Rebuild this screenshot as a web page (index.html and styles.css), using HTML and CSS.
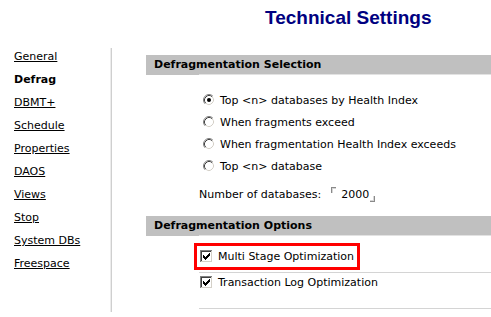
FILE: index.html
```html
<!DOCTYPE html>
<html>
<head>
<meta charset="utf-8">
<title>Technical Settings</title>
<link rel="stylesheet" href="styles.css">
</head>
<body>
<h1 class="page-title">Technical Settings</h1>
<div class="main">
  <nav class="side-nav">
    <a class="nav-link" href="#">General</a>
    <span class="nav-link current">Defrag</span>
    <a class="nav-link" href="#">DBMT+</a>
    <a class="nav-link" href="#">Schedule</a>
    <a class="nav-link" href="#">Properties</a>
    <a class="nav-link" href="#">DAOS</a>
    <a class="nav-link" href="#">Views</a>
    <a class="nav-link" href="#">Stop</a>
    <a class="nav-link" href="#">System DBs</a>
    <a class="nav-link" href="#">Freespace</a>
  </nav>
  <section class="content">
    <div class="section-head">Defragmentation Selection</div>
    <div class="radio-list">
      <div class="radio-row">
        <svg class="radio" width="12" height="12" viewBox="0 0 12 12"><circle cx="6" cy="6" r="5" fill="#fff"/><path d="M2.11 9.89A5.5 5.5 0 0 1 9.89 2.11" fill="none" stroke="#808080"/><path d="M9.89 2.11A5.5 5.5 0 0 1 2.11 9.89" fill="none" stroke="#fff"/><path d="M2.82 9.18A4.5 4.5 0 0 1 9.18 2.82" fill="none" stroke="#404040"/><path d="M9.18 2.82A4.5 4.5 0 0 1 2.82 9.18" fill="none" stroke="#d4d0c8"/><circle cx="6" cy="6" r="2" fill="#000"/></svg>
        <span>Top &lt;n&gt; databases by Health Index</span>
      </div>
      <div class="radio-row">
        <svg class="radio" width="12" height="12" viewBox="0 0 12 12"><circle cx="6" cy="6" r="5" fill="#fff"/><path d="M2.11 9.89A5.5 5.5 0 0 1 9.89 2.11" fill="none" stroke="#808080"/><path d="M9.89 2.11A5.5 5.5 0 0 1 2.11 9.89" fill="none" stroke="#fff"/><path d="M2.82 9.18A4.5 4.5 0 0 1 9.18 2.82" fill="none" stroke="#404040"/><path d="M9.18 2.82A4.5 4.5 0 0 1 2.82 9.18" fill="none" stroke="#d4d0c8"/></svg>
        <span>When fragments exceed</span>
      </div>
      <div class="radio-row">
        <svg class="radio" width="12" height="12" viewBox="0 0 12 12"><circle cx="6" cy="6" r="5" fill="#fff"/><path d="M2.11 9.89A5.5 5.5 0 0 1 9.89 2.11" fill="none" stroke="#808080"/><path d="M9.89 2.11A5.5 5.5 0 0 1 2.11 9.89" fill="none" stroke="#fff"/><path d="M2.82 9.18A4.5 4.5 0 0 1 9.18 2.82" fill="none" stroke="#404040"/><path d="M9.18 2.82A4.5 4.5 0 0 1 2.82 9.18" fill="none" stroke="#d4d0c8"/></svg>
        <span>When fragmentation Health Index exceeds</span>
      </div>
      <div class="radio-row">
        <svg class="radio" width="12" height="12" viewBox="0 0 12 12"><circle cx="6" cy="6" r="5" fill="#fff"/><path d="M2.11 9.89A5.5 5.5 0 0 1 9.89 2.11" fill="none" stroke="#808080"/><path d="M9.89 2.11A5.5 5.5 0 0 1 2.11 9.89" fill="none" stroke="#fff"/><path d="M2.82 9.18A4.5 4.5 0 0 1 9.18 2.82" fill="none" stroke="#404040"/><path d="M9.18 2.82A4.5 4.5 0 0 1 2.82 9.18" fill="none" stroke="#d4d0c8"/></svg>
        <span>Top &lt;n&gt; database</span>
      </div>
    </div>
    <div class="number-row">
      <span>Number of databases:</span>
      <span class="num-field">2000</span>
    </div>
    <div class="section-head">Defragmentation Options</div>
    <div class="options">
      <div class="opt">
        <span class="opt-item highlight">
          <svg class="check" width="13" height="13" viewBox="0 0 13 13" shape-rendering="crispEdges"><rect width="13" height="13" fill="#fff"/><path d="M0.5 12V0.5H12" stroke="#808080" fill="none"/><path d="M1.5 11V1.5H11" stroke="#404040" fill="none"/><path d="M0 12.5H12.5V0" stroke="#fff" fill="none"/><path d="M1 11.5H11.5V1" stroke="#d4d0c8" fill="none"/><path d="M3 5h1v3H3zM4 6h1v3H4zM5 7h1v3H5zM6 6h1v3H6zM7 5h1v3H7zM8 4h1v3H8zM9 3h1v3H9z" fill="#000"/></svg>
          <span>Multi Stage Optimization</span>
        </span>
      </div>
      <div class="opt">
        <span class="opt-item">
          <svg class="check" width="13" height="13" viewBox="0 0 13 13" shape-rendering="crispEdges"><rect width="13" height="13" fill="#fff"/><path d="M0.5 12V0.5H12" stroke="#808080" fill="none"/><path d="M1.5 11V1.5H11" stroke="#404040" fill="none"/><path d="M0 12.5H12.5V0" stroke="#fff" fill="none"/><path d="M1 11.5H11.5V1" stroke="#d4d0c8" fill="none"/><path d="M3 5h1v3H3zM4 6h1v3H4zM5 7h1v3H5zM6 6h1v3H6zM7 5h1v3H7zM8 4h1v3H8zM9 3h1v3H9z" fill="#000"/></svg>
          <span>Transaction Log Optimization</span>
        </span>
      </div>
    </div>
  </section>
</div>
</body>
</html>
```
FILE: styles.css
```css
html, body {
  margin: 0;
  padding: 0;
  background: #fff;
}
body {
  font-family: "DejaVu Sans", Verdana, sans-serif;
  font-size: 11px;
  color: #000;
}
.page-title {
  margin: 0;
  padding: 7px 0 0 265px;
  font-family: "Liberation Sans", Arial, sans-serif;
  font-size: 19px;
  line-height: 22px;
  font-weight: bold;
  color: #000080;
}
.main {
  display: flex;
  align-items: flex-start;
  margin-top: 16px;
}
.side-nav {
  width: 97px;
  padding-left: 14px;
  display: flex;
  flex-direction: column;
  align-items: flex-start;
}
.nav-link {
  line-height: 23px;
  color: #000;
  text-decoration: underline;
}
.nav-link.current {
  font-weight: bold;
  text-decoration: none;
}
.content {
  flex: 1;
  margin-top: 3px;
  border-left: 1px solid #cfcfcf;
  box-shadow: -1px 0 0 #ececec;
  padding: 7px 0 3px 34px;
}
.section-head {
  height: 20px;
  line-height: 20px;
  padding-left: 8px;
  font-weight: bold;
  background: linear-gradient(to right, #c0c0c0 53px, #e2e2e2 53px) left bottom / 100% 1px no-repeat, #c0c0c0;
}
.radio-list {
  margin-top: 14px;
  padding-left: 57px;
}
.radio-row {
  display: flex;
  align-items: center;
  height: 22px;
  gap: 5px;
}
.radio {
  display: block;
  flex: none;
}
.number-row {
  display: flex;
  align-items: center;
  height: 22px;
  margin: 6px 0 11px;
  padding-left: 53px;
}
.num-field {
  position: relative;
  width: 34px;
  height: 13px;
  line-height: 13px;
  margin-left: 10px;
  padding-left: 10px;
  margin-top: 1px;
}
.num-field::before,
.num-field::after {
  content: "";
  position: absolute;
  width: 4px;
  height: 5px;
}
.num-field::before {
  left: 0;
  top: -1px;
  border-left: 1px solid #8a8a8a;
  border-top: 1px solid #8a8a8a;
  box-shadow: inset 1px 1px 0 #d6d6d6;
}
.num-field::after {
  right: 0;
  bottom: -1px;
  border-right: 1px solid #8a8a8a;
  border-bottom: 1px solid #8a8a8a;
  box-shadow: inset -1px -1px 0 #d6d6d6;
}
.options {
  margin-top: 11px;
  padding-left: 53px;
}
.opt {
  padding: 2px 0 5px;
  border-bottom: 1px solid #d4d4d4;
  line-height: 15px;
}
.opt:last-child {
  padding-bottom: 15px;
}
.opt-item {
  display: inline-flex;
  align-items: center;
  gap: 5px;
  margin-left: 1px;
}
.check {
  display: block;
  flex: none;
}
.highlight {
  outline: 3px solid #ff0000;
  outline-offset: 3px;
}
```
